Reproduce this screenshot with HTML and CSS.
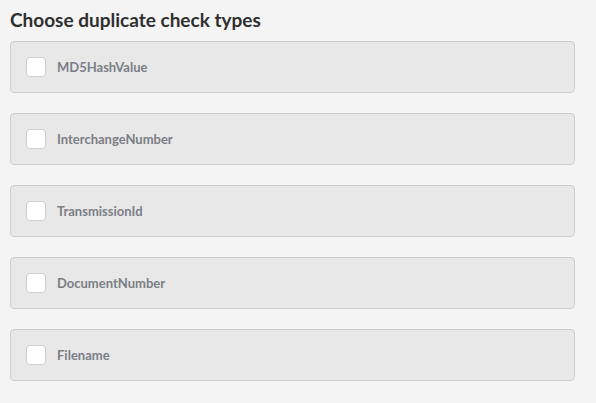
FILE: index.html
```html
<!DOCTYPE html>
<html>
<head>
<meta charset="utf-8">
<link rel="stylesheet" href="styles.css">
</head>
<body>
<div class="page">
  <h2 class="title">Choose duplicate check types</h2>
  <div class="list">
    <label class="card"><span class="box"></span><span class="label">MD5HashValue</span></label>
    <label class="card"><span class="box"></span><span class="label">InterchangeNumber</span></label>
    <label class="card"><span class="box"></span><span class="label">TransmissionId</span></label>
    <label class="card"><span class="box"></span><span class="label">DocumentNumber</span></label>
    <label class="card"><span class="box"></span><span class="label">Filename</span></label>
  </div>
</div>
</body>
</html>
```
FILE: styles.css
```css
html, body {
  margin: 0;
  padding: 0;
  background: #f4f4f4;
}
.page {
  padding: 8px 21px 0 10px;
  font-family: Lato, "Open Sans", sans-serif;
}
.title {
  margin: 0 0 10px 0;
  font-size: 19px;
  font-weight: 700;
  line-height: 23px;
  color: #2f2f2f;
}
.list {
  display: flex;
  flex-direction: column;
  gap: 20px;
}
.card {
  display: flex;
  align-items: center;
  height: 50px;
  padding-left: 15px;
  background: #e8e8e8;
  border: 1px solid #cecece;
  border-radius: 4px;
}
.box {
  width: 18px;
  height: 18px;
  background: #fff;
  border: 1px solid #d0d0d0;
  border-radius: 4px;
  margin-right: 11px;
}
.label {
  font-size: 13px;
  font-weight: 700;
  color: #7b7f86;
}
```
